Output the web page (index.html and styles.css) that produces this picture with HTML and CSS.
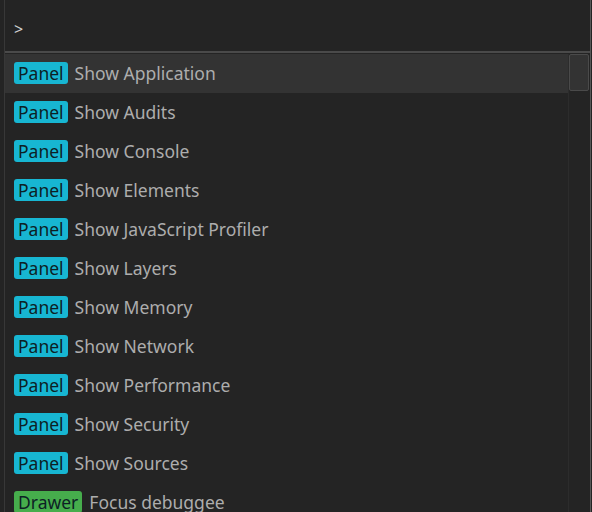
FILE: index.html
```html
<!DOCTYPE html>
<html>
<head>
<meta charset="utf-8">
<link rel="stylesheet" href="styles.css">
</head>
<body>
<div class="palette">
  <div class="prompt">&gt;</div>
  <div class="body">
    <div class="list">
      <div class="row selected"><span class="badge panel">Panel</span><span class="label">Show Application</span></div>
      <div class="row"><span class="badge panel">Panel</span><span class="label">Show Audits</span></div>
      <div class="row"><span class="badge panel">Panel</span><span class="label">Show Console</span></div>
      <div class="row"><span class="badge panel">Panel</span><span class="label">Show Elements</span></div>
      <div class="row"><span class="badge panel">Panel</span><span class="label">Show JavaScript Profiler</span></div>
      <div class="row"><span class="badge panel">Panel</span><span class="label">Show Layers</span></div>
      <div class="row"><span class="badge panel">Panel</span><span class="label">Show Memory</span></div>
      <div class="row"><span class="badge panel">Panel</span><span class="label">Show Network</span></div>
      <div class="row"><span class="badge panel">Panel</span><span class="label">Show Performance</span></div>
      <div class="row"><span class="badge panel">Panel</span><span class="label">Show Security</span></div>
      <div class="row"><span class="badge panel">Panel</span><span class="label">Show Sources</span></div>
      <div class="row"><span class="badge drawer">Drawer</span><span class="label">Focus debuggee</span></div>
    </div>
    <div class="scrollbar"><div class="thumb"></div></div>
  </div>
</div>
</body>
</html>
```
FILE: styles.css
```css
html, body {
  margin: 0;
  padding: 0;
  background: #242424;
  overflow: hidden;
  height: 512px;
}
.palette {
  margin-left: 4px;
  width: 585px;
  height: 512px;
  border-left: 1px solid #383838;
  border-right: 1px solid #575757;
  font-family: "Noto Sans", "DejaVu Sans", sans-serif;
  font-size: 17.5px;
  overflow: hidden;
}
.prompt {
  height: 53px;
  box-sizing: border-box;
  padding: 18px 0 0 9px;
  color: #d0d0d0;
  font-size: 16px;
  border-bottom: 2px solid #4a4a4a;
}
.body {
  display: flex;
  padding-top: 1px;
}
.list {
  flex: 1;
}
.row {
  height: 39px;
  box-sizing: border-box;
  padding-bottom: 1px;
  display: flex;
  align-items: center;
  padding-left: 9px;
  gap: 7px;
  color: #adadad;
  white-space: nowrap;
}
.row.selected {
  background: #333333;
}
.badge {
  display: inline-flex;
  align-items: center;
  height: 22px;
  padding: 0 4px;
  border-radius: 3px;
  color: #0d1f25;
}
.badge.panel {
  background: #17b6d2;
}
.badge.drawer {
  background: #46ad4c;
}
.scrollbar {
  width: 21px;
  border-left: 1px solid #2c2c2c;
  height: 460px;
}
.thumb {
  height: 35px;
  margin-right: 1px;
  border: 1px solid #4a4a4a;
  border-radius: 2px;
  background: #333333;
}
```
